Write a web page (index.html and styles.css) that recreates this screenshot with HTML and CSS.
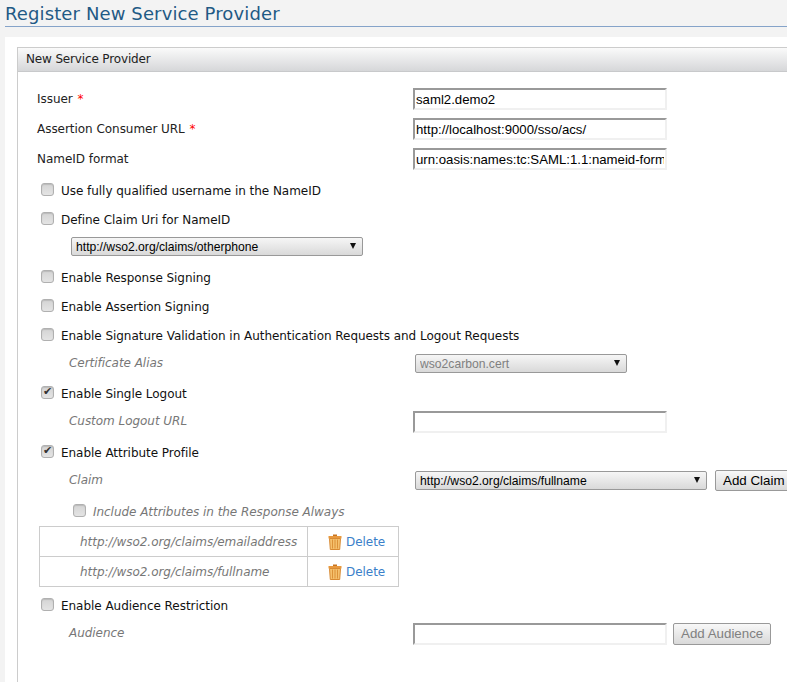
FILE: index.html
```html
<!DOCTYPE html>
<html lang="en">

<head>
    <meta charset="UTF-8">
    <meta name="viewport" content="width=device-width, initial-scale=1.0">
    <title>Register New Service Provider</title>
    <link rel="stylesheet" href="styles.css">
</head>

<body>

    <h2 class="page-title">Register New Service Provider</h2>

    <div class="content">
        <div class="box">
            <div class="box-header">New Service Provider</div>

            <form class="box-body">
                <div class="row field-row">
                    <label class="label">Issuer <span class="required">*</span></label>
                    <input class="text-input" type="text" value="saml2.demo2">
                </div>
                <div class="row field-row">
                    <label class="label">Assertion Consumer URL <span class="required">*</span></label>
                    <input class="text-input" type="text" value="http://localhost:9000/sso/acs/">
                </div>
                <div class="row field-row">
                    <label class="label">NameID format</label>
                    <input class="text-input" type="text" value="urn:oasis:names:tc:SAML:1.1:nameid-format:emailAddress">
                </div>

                <div class="row check-row first-check">
                    <input class="check" type="checkbox">
                    <label>Use fully qualified username in the NameID</label>
                </div>
                <div class="row check-row">
                    <input class="check" type="checkbox">
                    <label>Define Claim Uri for NameID</label>
                </div>
                <div class="row nameid-select-row">
                    <span class="select-wrap select-nameid">
                        <select class="select">
                            <option>http://wso2.org/claims/otherphone</option>
                        </select>
                    </span>
                </div>
                <div class="row check-row">
                    <input class="check" type="checkbox">
                    <label>Enable Response Signing</label>
                </div>
                <div class="row check-row">
                    <input class="check" type="checkbox">
                    <label>Enable Assertion Signing</label>
                </div>
                <div class="row check-row">
                    <input class="check" type="checkbox">
                    <label>Enable Signature Validation in Authentication Requests and Logout Requests</label>
                </div>
                <div class="row sub-row spaced-row">
                    <label class="sub-label">Certificate Alias</label>
                    <span class="select-wrap select-cert">
                        <select class="select" disabled>
                            <option>wso2carbon.cert</option>
                        </select>
                    </span>
                </div>
                <div class="row check-row">
                    <input class="check" type="checkbox" checked>
                    <label>Enable Single Logout</label>
                </div>
                <div class="row sub-row spaced-row-lg">
                    <label class="sub-label">Custom Logout URL</label>
                    <input class="text-input" type="text">
                </div>
                <div class="row check-row">
                    <input class="check" type="checkbox" checked>
                    <label>Enable Attribute Profile</label>
                </div>
                <div class="row sub-row">
                    <label class="sub-label">Claim</label>
                    <span class="select-wrap select-claim">
                        <select class="select">
                            <option>http://wso2.org/claims/fullname</option>
                        </select>
                    </span>
                    <button class="btn btn-claim" type="button">Add Claim</button>
                </div>
                <div class="row include-row">
                    <input class="check" type="checkbox">
                    <label>Include Attributes in the Response Always</label>
                </div>

                <table class="claims">
                    <tr>
                        <td class="claim-uri">http://wso2.org/claims/emailaddress</td>
                        <td class="claim-action">
                            <a href="#" class="delete-link">
                                <svg class="trash" viewBox="0 0 14 16" width="14" height="16">
                                    <path d="M5 0.5h4v1.5H5z" fill="#c8741f"/>
                                    <path d="M0.5 2h13v2.5H0.5z" fill="#e8993f"/>
                                    <path d="M1.5 4.5h11l-0.8 11H2.3z" fill="#f5c06c" stroke="#d88a33"/>
                                    <path d="M4.5 5.5v9M7 5.5v9M9.5 5.5v9" stroke="#d98c33" stroke-width="0.9"/>
                                </svg>
                                Delete
                            </a>
                        </td>
                    </tr>
                    <tr>
                        <td class="claim-uri">http://wso2.org/claims/fullname</td>
                        <td class="claim-action">
                            <a href="#" class="delete-link">
                                <svg class="trash" viewBox="0 0 14 16" width="14" height="16">
                                    <path d="M5 0.5h4v1.5H5z" fill="#c8741f"/>
                                    <path d="M0.5 2h13v2.5H0.5z" fill="#e8993f"/>
                                    <path d="M1.5 4.5h11l-0.8 11H2.3z" fill="#f5c06c" stroke="#d88a33"/>
                                    <path d="M4.5 5.5v9M7 5.5v9M9.5 5.5v9" stroke="#d98c33" stroke-width="0.9"/>
                                </svg>
                                Delete
                            </a>
                        </td>
                    </tr>
                </table>

                <div class="row check-row audience-check">
                    <input class="check" type="checkbox">
                    <label>Enable Audience Restriction</label>
                </div>
                <div class="row sub-row">
                    <label class="sub-label">Audience</label>
                    <input class="text-input" type="text">
                    <button class="btn btn-audience" type="button" disabled>Add Audience</button>
                </div>
            </form>
        </div>
    </div>

</body>

</html>
```

FILE: styles.css
```css
html,
body {
    height: 100%;
}

body {
    margin: 0;
    overflow: hidden;
    background-color: #f3f3f3;
    font-family: "DejaVu Sans", sans-serif;
    font-size: 12px;
    letter-spacing: -0.04px;
    color: #222;
}

.page-title {
    margin: 0 0 0 5px;
    height: 26px;
    border-bottom: 1px solid #85a3c9;
    font-size: 18px;
    font-weight: normal;
    letter-spacing: 0.12px;
    line-height: 28px;
    color: #1f5a85;
}

.content {
    margin: 10px 0 0 5px;
    padding: 10px 0 0 12px;
    width: 830px;
    height: 660px;
    background-color: #fff;
}

.box {
    height: 100%;
    border-left: 1px solid #ccc;
}

.box-header {
    height: 23px;
    padding-left: 8px;
    border-top: 1px solid #ccc;
    border-bottom: 1px solid #c8c9cb;
    background: linear-gradient(to bottom, #fafafa, #d6d7d9);
    font-size: 12px;
    letter-spacing: -0.15px;
    line-height: 22px;
    color: #222;
}

.box-body {
    padding: 12px 0 0 19px;
}

.row {
    display: flex;
    align-items: center;
}

.field-row {
    height: 30px;
}

.label {
    width: 376px;
}

.required {
    margin-left: 1px;
    color: #f00;
}

.text-input {
    box-sizing: border-box;
    flex: none;
    width: 254px;
    height: 22px;
    padding: 1px;
    border: 2px solid;
    border-color: #999 #f0f0f0 #f0f0f0 #999;
    background-color: #fff;
    font-family: "Liberation Sans", sans-serif;
    font-size: 13.2px;
    color: #000;
}

.check {
    appearance: none;
    box-sizing: border-box;
    flex: none;
    width: 13px;
    height: 13px;
    margin: 0 7px 3px 4px;
    border: 1px solid #b0b0b0;
    border-radius: 3px;
    background: linear-gradient(to bottom, #d4d4d4, #e4e4e4);
    box-shadow: inset 0 1px 1px #bbb;
    position: relative;
}

.check:checked::after {
    content: "\2714";
    position: absolute;
    left: 1px;
    top: -3px;
    font-size: 11px;
    line-height: 14px;
    color: #333;
}

.check-row {
    height: 29px;
    color: #111;
}

.check-row label {
    line-height: 14px;
}

.first-check {
    margin-top: 2px;
}

.nameid-select-row {
    height: 19px;
    margin: 3px 0 7px 34px;
}

.select-wrap {
    position: relative;
    display: block;
    flex: none;
    height: 19px;
}

/* dropdown arrow, select has no native one with appearance none */
.select-wrap::after {
    content: "";
    position: absolute;
    top: 6px;
    right: 7px;
    border-top: 6px solid #111;
    border-left: 3px solid transparent;
    border-right: 3px solid transparent;
}

.select {
    appearance: none;
    box-sizing: border-box;
    display: block;
    width: 100%;
    height: 19px;
    padding: 0 0 0 4px;
    border: 1px solid #999;
    border-radius: 2px;
    background: linear-gradient(to bottom, #f6f6f6, #d9d9d9);
    font-family: "Liberation Sans", sans-serif;
    font-size: 12.15px;
    color: #000;
    opacity: 1;
}

.select:disabled {
    color: #808080;
}

.select-nameid {
    width: 292px;
}

.select-cert {
    width: 212px;
    margin-left: 2px;
}

.select-claim {
    width: 292px;
    margin-left: 2px;
}

.sub-row {
    height: 27px;
}

.spaced-row {
    margin-bottom: 2px;
}

.spaced-row-lg {
    margin-bottom: 3px;
}

.sub-label {
    flex: none;
    width: 344px;
    margin-bottom: 2px;
    padding-left: 32px;
    font-style: italic;
    color: #777;
}

.btn {
    box-sizing: border-box;
    flex: none;
    height: 21px;
    padding: 0 7px;
    border: 1px solid #999;
    border-radius: 2px;
    background: linear-gradient(to bottom, #f8f8f8, #d9d9d9);
    font-family: "Liberation Sans", sans-serif;
    font-size: 13.33px;
    color: #000;
}

.btn-claim {
    margin-left: 8px;
}

.btn-audience {
    height: 22px;
    margin-left: 6px;
    color: #808080;
}

.include-row {
    height: 28px;
    margin: 4px 0 0 32px;
    font-style: italic;
    color: #777;
}

.claims {
    width: 360px;
    margin: 0 0 5px 2px;
    border-collapse: collapse;
}

.claims td {
    height: 29px;
    padding: 0;
    border: 1px solid #ccc;
}

.claims .claim-uri {
    padding-left: 40px;
    font-style: italic;
    color: #777;
}

.claims .claim-action {
    width: 70px;
    height: 28px;
    padding: 1px 0 0 20px;
}

.delete-link {
    display: flex;
    align-items: center;
    gap: 4px;
    color: #3a7fc9;
    text-decoration: none;
}

.audience-check {
    height: 28px;
}
```
